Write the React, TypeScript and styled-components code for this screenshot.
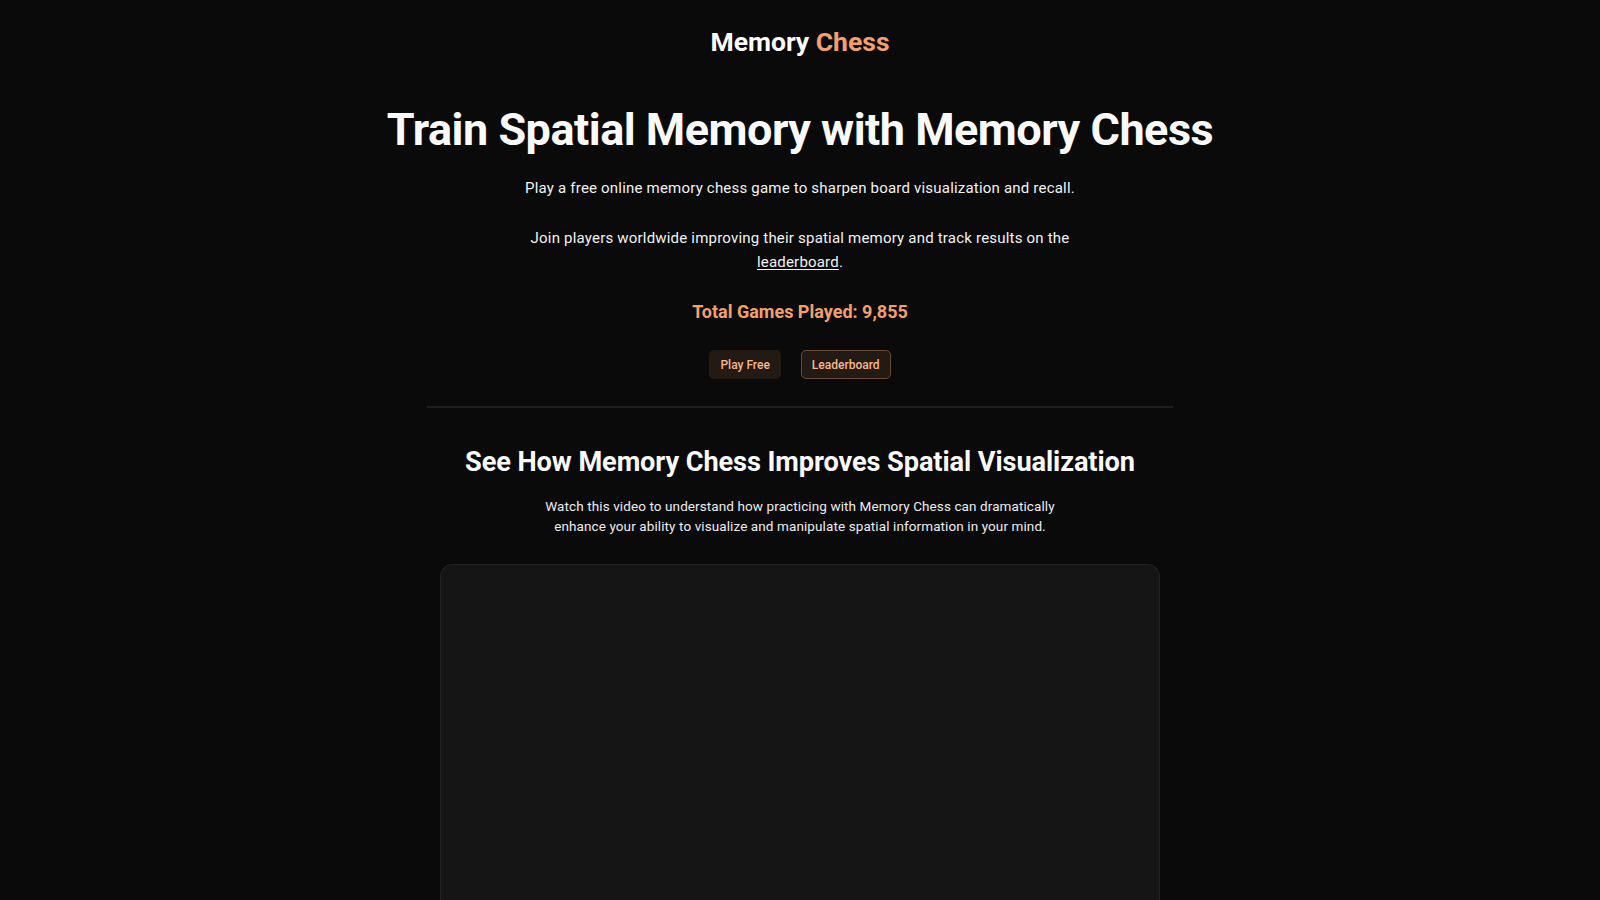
import React from "react";
import styled, { createGlobalStyle } from "styled-components";

const GlobalStyle = createGlobalStyle`
  html, body {
    margin: 0;
    padding: 0;
    background: #0a0a0a;
    color: #fafafa;
    font-family: Roboto, "Liberation Sans", sans-serif;
  }
`;

const Page = styled.div`
  min-height: 100vh;
  display: flex;
  flex-direction: column;
  align-items: center;
  padding-bottom: 40px;
`;

const Header = styled.header`
  height: 82px;
  display: flex;
  align-items: center;
  justify-content: center;
`;

const Logo = styled.a`
  font-size: 26.5px;
  font-weight: 700;
  color: #ffffff;
  text-decoration: none;

  span {
    color: #f4a06c;
  }
`;

const Hero = styled.section`
  display: flex;
  flex-direction: column;
  align-items: center;
  text-align: center;
  padding-top: 20px;
`;

const Title = styled.h1`
  margin: 0;
  font-size: 45px;
  line-height: 56px;
  font-weight: 700;
  letter-spacing: -0.5px;
`;

const Lead = styled.p<{ $gap?: number }>`
  margin: ${(p) => p.$gap ?? 18}px 0 0;
  max-width: 576px;
  font-size: 15px;
  line-height: 24px;
  letter-spacing: 0.2px;
  color: #f2f2f2;
`;

const Link = styled.a`
  color: #f2f2f2;
  text-decoration: underline;
  text-underline-offset: 2px;
`;

const Stat = styled.p`
  margin: 27px 0 0;
  font-size: 18px;
  font-weight: 700;
  color: #f4a06c;
`;

const Actions = styled.div`
  display: flex;
  gap: 20px;
  margin-top: 28px;
`;

const Button = styled.a<{ $outlined?: boolean }>`
  display: inline-flex;
  align-items: center;
  height: 29px;
  box-sizing: border-box;
  padding: 0 10px;
  border-radius: 5px;
  background: #231a14;
  border: 1px solid ${(p) => (p.$outlined ? "#6b4a33" : "transparent")};
  color: #f7b88c;
  font-size: 12px;
  font-weight: 500;
  text-decoration: none;
  cursor: pointer;
`;

const Divider = styled.hr`
  width: 746px;
  margin: 27px 0 0;
  border: 0;
  border-top: 2px solid #1d1d1d;
`;

const VideoSection = styled.section`
  display: flex;
  flex-direction: column;
  align-items: center;
  text-align: center;
  padding-top: 36px;
`;

const SectionTitle = styled.h2`
  margin: 0;
  font-size: 27.2px;
  line-height: 36px;
  font-weight: 700;
  letter-spacing: -0.1px;
`;

const SectionText = styled.p`
  margin: 16px 0 0;
  max-width: 520px;
  font-size: 13.5px;
  line-height: 20px;
  letter-spacing: 0.1px;
  color: #ededed;
`;

const VideoFrame = styled.div`
  width: 720px;
  height: 405px;
  margin-top: 28px;
  box-sizing: border-box;
  border: 1px solid #222222;
  border-radius: 12px;
  background: #151515;
`;

export default function App() {
  return (
    <>
      <GlobalStyle />
      <Page>
        <Header>
          <Logo href="#">
            Memory <span>Chess</span>
          </Logo>
        </Header>
        <Hero>
          <Title>Train Spatial Memory with Memory Chess</Title>
          <Lead $gap={18}>
            Play a free online memory chess game to sharpen board visualization and recall.
          </Lead>
          <Lead $gap={26}>
            Join players worldwide improving their spatial memory and track results on the{" "}
            <Link href="#">leaderboard</Link>.
          </Lead>
          <Stat>Total Games Played: 9,855</Stat>
          <Actions>
            <Button href="#">Play Free</Button>
            <Button href="#" $outlined>
              Leaderboard
            </Button>
          </Actions>
        </Hero>
        <Divider />
        <VideoSection>
          <SectionTitle>See How Memory Chess Improves Spatial Visualization</SectionTitle>
          <SectionText>
            Watch this video to understand how practicing with Memory Chess can dramatically enhance
            your ability to visualize and manipulate spatial information in your mind.
          </SectionText>
          <VideoFrame />
        </VideoSection>
      </Page>
    </>
  );
}
